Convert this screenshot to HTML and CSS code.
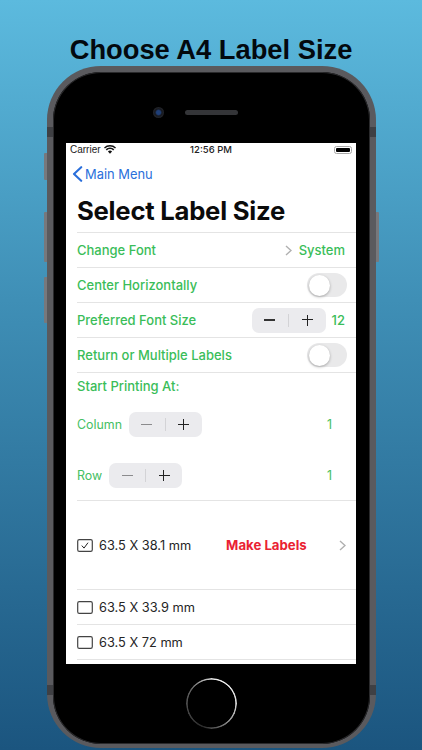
FILE: index.html
```html
<!DOCTYPE html>
<html lang="en">
<head>
<meta charset="utf-8">
<title>Choose A4 Label Size</title>
<link rel="stylesheet" href="styles.css">
</head>
<body>
<h1 class="headline">Choose A4 Label Size</h1>
<div class="phone">
  <span class="side side-mute"></span>
  <span class="side side-up"></span>
  <span class="side side-down"></span>
  <span class="side side-power"></span>
  <span class="band band-tl"></span>
  <span class="band band-tr"></span>
  <span class="band band-bl"></span>
  <span class="band band-br"></span>
  <div class="bezel">
    <div class="sensors">
      <span class="camera"></span>
      <span class="speaker"></span>
    </div>
    <main class="screen">
      <div class="status">
        <span class="carrier">Carrier
          <svg class="wifi" viewBox="0 0 14 10" width="12" height="9"><path d="M7 10 4.6 7.4a3.4 3.4 0 0 1 4.8 0ZM3.3 6.1 2 4.8a7 7 0 0 1 10 0l-1.3 1.3a5.2 5.2 0 0 0-7.4 0ZM1.1 3.9 0 2.7a9.9 9.9 0 0 1 14 0l-1.1 1.2a8.3 8.3 0 0 0-11.8 0Z" fill="#111"/></svg>
        </span>
        <span class="clock">12:56 PM</span>
        <span class="battery"><span class="battery-fill"></span></span>
      </div>
      <div class="nav">
        <svg class="back" viewBox="0 0 11 16" width="11" height="16"><path d="M9.2 1.2 2 8l7.2 6.8" fill="none" stroke="#2a6fdb" stroke-width="2.1" stroke-linecap="round" stroke-linejoin="round"/></svg>
        <span>Main Menu</span>
      </div>
      <h2 class="title">Select Label Size</h2>

      <div class="row first">
        <span class="label">Change Font</span>
        <span class="value-group">
          <svg class="chev" viewBox="0 0 7 11" width="7" height="11"><path d="M1 1l5 4.5L1 10" fill="none" stroke="#b0b0b0" stroke-width="1.4"/></svg>
          <span class="label">System</span>
        </span>
      </div>
      <div class="row">
        <span class="label">Center Horizontally</span>
        <span class="toggle"><span class="knob"></span></span>
      </div>
      <div class="row">
        <span class="label">Preferred Font Size</span>
        <span class="value-group">
          <span class="stepper"><span class="minus dark"></span><span class="divider"></span><span class="plus"></span></span>
          <span class="label count-12">12</span>
        </span>
      </div>
      <div class="row">
        <span class="label">Return or Multiple Labels</span>
        <span class="toggle"><span class="knob"></span></span>
      </div>

      <div class="start">
        <span class="label">Start Printing At:</span>
        <div class="pick pick-col">
          <span class="plain">Column</span>
          <span class="stepper"><span class="minus"></span><span class="divider"></span><span class="plus"></span></span>
          <span class="plain count">1</span>
        </div>
        <div class="pick pick-row">
          <span class="plain">Row</span>
          <span class="stepper"><span class="minus"></span><span class="divider"></span><span class="plus"></span></span>
          <span class="plain count">1</span>
        </div>
      </div>

      <div class="row selected">
        <svg class="box" viewBox="0 0 16 13" width="16" height="13"><rect x=".7" y=".7" width="14.6" height="11.6" rx="1.6" fill="none" stroke="#444" stroke-width="1.2"/><path d="M4.8 6.6l2.2 2.5 4-5.4" fill="none" stroke="#222" stroke-width="1"/></svg>
        <span class="size">63.5 X 38.1 mm</span>
        <span class="make">Make Labels</span>
        <svg class="chev chev-make" viewBox="0 0 7 11" width="7" height="11"><path d="M1 1l5 4.5L1 10" fill="none" stroke="#b0b0b0" stroke-width="1.4"/></svg>
      </div>
      <div class="row plain-row">
        <svg class="box" viewBox="0 0 16 13" width="16" height="13"><rect x=".7" y=".7" width="14.6" height="11.6" rx="1.6" fill="none" stroke="#444" stroke-width="1.2"/></svg>
        <span class="size">63.5 X 33.9 mm</span>
      </div>
      <div class="row plain-row">
        <svg class="box" viewBox="0 0 16 13" width="16" height="13"><rect x=".7" y=".7" width="14.6" height="11.6" rx="1.6" fill="none" stroke="#444" stroke-width="1.2"/></svg>
        <span class="size">63.5 X 72 mm</span>
      </div>
    </main>
    <div class="home-area"><span class="home"></span></div>
  </div>
</div>
</body>
</html>
```
FILE: styles.css
```css
* { box-sizing: border-box; }
html, body { margin: 0; height: 750px; overflow: hidden; }
body {
  width: 422px;
  background: linear-gradient(180deg, #5cbade 0%, #3f8fb6 40%, #1b557f 100%);
  font-family: Inter, "Liberation Sans", sans-serif;
  display: flex;
  flex-direction: column;
  align-items: center;
}
.headline {
  margin: 0;
  height: 66px;
  padding-top: 34px;
  font: 700 27.3px/32px "Liberation Sans", Arial, sans-serif;
  color: #03090e;
  white-space: nowrap;
}
.phone {
  position: relative;
  width: 329px;
  height: 682px;
  flex: none;
  border-radius: 54px;
  background: #5a5a5e;
  padding: 6px 6px 4px;
}
.side { position: absolute; width: 3px; background: #77787c; border-radius: 1px 0 0 1px; }
.side-mute { left: -3px; top: 87px; height: 27px; }
.side-up { left: -3px; top: 146px; height: 50px; }
.side-down { left: -3px; top: 211px; height: 46px; }
.side-power { right: -3px; top: 146px; height: 50px; border-radius: 0 1px 1px 0; }
.band { position: absolute; width: 6px; height: 10px; background: #3f4044; }
.band-tl { left: 0; top: 61px; }
.band-tr { right: 0; top: 61px; }
.band-bl { left: 0; top: 619px; }
.band-br { right: 0; top: 619px; }
.bezel {
  height: 100%;
  background: #000;
  border-radius: 48px;
  box-shadow: inset 0 0 0 1px #2a2a2c;
  display: flex;
  flex-direction: column;
  align-items: center;
}
.sensors {
  height: 71px;
  width: 100%;
  flex: none;
  display: flex;
  align-items: center;
  padding: 9px 0 0 100px;
  gap: 21px;
}
.camera {
  width: 11px;
  height: 11px;
  border-radius: 50%;
  background: radial-gradient(circle at 50% 50%, #1f3f78 0 25%, #16181e 45%, #34363c 100%);
}
.speaker { width: 53px; height: 5px; border-radius: 3px; background: #343538; }
.screen {
  width: 290px;
  height: 521px;
  flex: none;
  background: #fff;
  overflow: hidden;
  color: #222;
}
.status {
  height: 13px;
  display: grid;
  grid-template-columns: 1fr auto 1fr;
  align-items: center;
  padding: 0 4px;
  font-size: 9.5px;
  color: #222;
}
.carrier { display: flex; align-items: center; gap: 3px; font-family: "Liberation Sans", sans-serif; font-size: 10px; }
.clock { font-weight: 500; font-size: 9.5px; }
.battery {
  justify-self: end;
  width: 18px;
  height: 8px;
  padding: 1px;
  border: 1px solid #a8a8a8;
  border-radius: 2.5px;
  display: flex;
}
.battery-fill { flex: 1; background: #000; border-radius: 1px; }
.nav {
  height: 30px;
  padding-left: 6px;
  display: flex;
  align-items: center;
  gap: 2px;
  color: #2a6fdb;
  font-size: 12.9px;
  margin-top: 3px;
}
.title {
  margin: 0;
  height: 43px;
  padding-left: 11px;
  font-size: 25.7px;
  line-height: 43px;
  font-weight: 700;
  letter-spacing: -.25px;
  color: #0b0b0b;
}
.row {
  height: 35px;
  margin-left: 11px;
  padding-right: 9px;
  border-bottom: 1px solid #e4e4e4;
  display: flex;
  align-items: center;
  justify-content: space-between;
}
.row.first { border-top: 1px solid #e4e4e4; height: 36px; }
.row.plain-row { justify-content: flex-start; }
.label { color: #3abd59; font-size: 13px; font-weight: 500; white-space: nowrap; }
.plain { color: #45c063; font-size: 12.4px; white-space: nowrap; }
.value-group { display: flex; align-items: center; margin-right: 2px; }
.value-group .chev { margin-right: 7px; }
.count-12 { margin-left: 6px; }
.toggle {
  width: 40px;
  height: 24px;
  border-radius: 12px;
  background: #e9e9ea;
  padding: 1.5px;
  display: flex;
}
.knob { width: 21px; height: 21px; border-radius: 50%; background: #fff; box-shadow: 0 1px 3px rgba(0,0,0,.3); }
.stepper {
  width: 73px;
  height: 25px;
  border-radius: 7px;
  background: #ebebee;
  display: grid;
  grid-template-columns: 1fr 1px 1fr;
  align-items: center;
  justify-items: center;
  flex: none;
}
.value-group .stepper { width: 74px; }
.divider { width: 1px; height: 13px; background: #d3d3d6; }
.minus { width: 11px; height: 1.4px; background: #8b8b8d; }
.minus.dark { background: #333; }
.plus {
  width: 11px;
  height: 11px;
  background: linear-gradient(#222, #222) center / 100% 1.3px no-repeat, linear-gradient(#222, #222) center / 1.3px 100% no-repeat;
}
.start { height: 128px; margin-left: 11px; border-bottom: 1px solid #e4e4e4; padding-top: 5px; padding-right: 9px; display: flex; flex-direction: column; }
.pick { display: flex; align-items: center; gap: 7px; height: 25px; }
.pick-col { margin-top: 18px; }
.pick-row { margin-top: 26px; }
.count { margin-left: auto; margin-right: 15px; }
.row.selected { height: 89px; justify-content: flex-start; }
.box { flex: none; margin-right: 6px; }
.size { font-size: 12.8px; color: #252525; }
.make { color: #ea2232; font-size: 13.2px; font-weight: 700; margin-left: 35px; }
.chev-make { margin-left: auto; margin-right: 1px; }
.home-area { flex: 1; display: flex; align-items: center; justify-content: center; width: 100%; padding-bottom: 2px; }
.home {
  width: 51px;
  height: 51px;
  border-radius: 50%;
  background: conic-gradient(from 10deg, #eee 0deg, #ddd 80deg, #777 140deg, #2a2a2a 190deg, #444 240deg, #666 300deg, #eee 360deg);
  -webkit-mask: radial-gradient(circle, transparent 0 23.4px, #000 24.2px);
  mask: radial-gradient(circle, transparent 0 23.4px, #000 24.2px);
}
```
